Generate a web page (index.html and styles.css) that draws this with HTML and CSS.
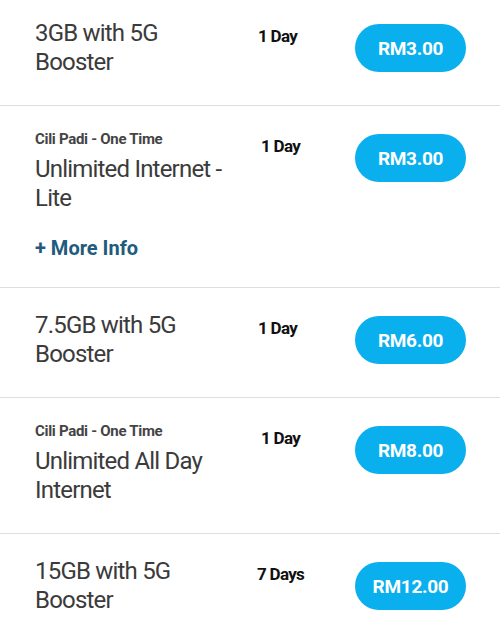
FILE: index.html
```html
<!DOCTYPE html>
<html lang="en">
<head>
<meta charset="utf-8">
<title>Plans</title>
<link rel="stylesheet" href="styles.css">
</head>
<body>
<ul class="plans">
  <li class="plan">
    <div class="plan-info">
      <p class="plan-name">3GB with 5G Booster</p>
    </div>
    <div class="plan-validity">1 Day</div>
    <div class="plan-action"><button class="price-btn">RM3.00</button></div>
  </li>
  <li class="plan plan--tagged">
    <div class="plan-info">
      <p class="plan-tag">Cili Padi - One Time</p>
      <p class="plan-name">Unlimited Internet - Lite</p>
      <a class="more-info" href="#">+ More Info</a>
    </div>
    <div class="plan-validity">1 Day</div>
    <div class="plan-action"><button class="price-btn">RM3.00</button></div>
  </li>
  <li class="plan">
    <div class="plan-info">
      <p class="plan-name">7.5GB with 5G Booster</p>
    </div>
    <div class="plan-validity">1 Day</div>
    <div class="plan-action"><button class="price-btn">RM6.00</button></div>
  </li>
  <li class="plan plan--tagged">
    <div class="plan-info">
      <p class="plan-tag">Cili Padi - One Time</p>
      <p class="plan-name">Unlimited All Day Internet</p>
    </div>
    <div class="plan-validity">1 Day</div>
    <div class="plan-action"><button class="price-btn">RM8.00</button></div>
  </li>
  <li class="plan">
    <div class="plan-info">
      <p class="plan-name">15GB with 5G Booster</p>
    </div>
    <div class="plan-validity plan-validity--wide">7 Days</div>
    <div class="plan-action"><button class="price-btn">RM12.00</button></div>
  </li>
</ul>
</body>
</html>
```

FILE: styles.css
```css
* { box-sizing: border-box; }

body {
  margin: 0;
  background: #ffffff;
  font-family: Roboto, "Noto Sans", sans-serif;
  color: #3a3a3a;
}

.plans {
  list-style: none;
  margin: -4px 0 0 0;
  padding: 0;
}

.plan {
  display: grid;
  grid-template-columns: 223px 97px 111px;
  align-items: start;
  padding: 23px 0 28px 35px;
  border-bottom: 1px solid #dedede;
}

.plan-info p { margin: 0; }

.plan-tag {
  font-size: 15px;
  line-height: 18px;
  font-weight: 700;
  color: #444444;
  letter-spacing: -0.3px;
  margin: 1px 0 7px 0 !important;
}

.plan-name {
  font-size: 24px;
  line-height: 29px;
  font-weight: 400;
  color: #3b3b3b;
  letter-spacing: -0.8px;
  width: 200px;
}

.more-info {
  display: block;
  margin: 23px 0 -1px 0;
  font-size: 20px;
  line-height: 24px;
  font-weight: 700;
  color: #1f5b7c;
  text-decoration: none;
  letter-spacing: 0;
}

.plan-validity {
  margin-top: 7px;
  font-size: 17px;
  line-height: 20px;
  font-weight: 700;
  color: #111111;
  letter-spacing: -0.7px;
}

.plan--tagged .plan-validity { padding-left: 3px; }
.plan-validity--wide { margin-left: -1px; }

.plan-action { margin-top: 5px; }

.price-btn {
  display: block;
  width: 111px;
  height: 48px;
  border: none;
  border-radius: 24px;
  background: #0aafee;
  color: #ffffff;
  font-family: Roboto, "Noto Sans", sans-serif;
  font-size: 19px;
  font-weight: 700;
  letter-spacing: -0.3px;
  padding: 0;
  cursor: pointer;
}
```
